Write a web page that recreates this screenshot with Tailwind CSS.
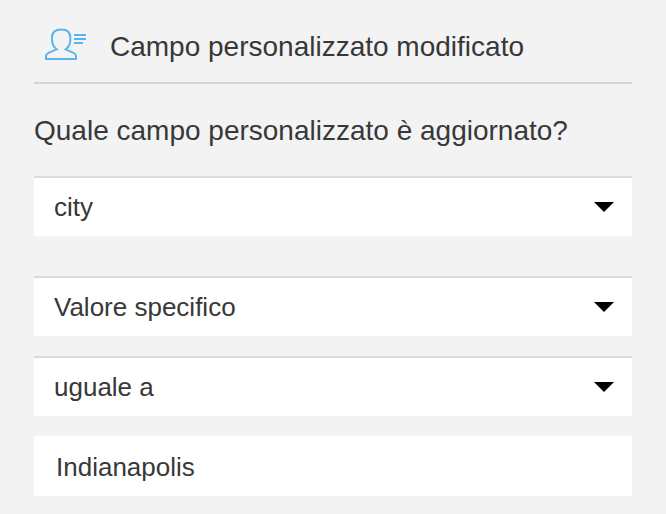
<!DOCTYPE html>
<html lang="it">
<head>
  <meta charset="UTF-8" />
  <meta name="viewport" content="width=device-width, initial-scale=1" />
  <title>Campo personalizzato modificato</title>
  <script src="https://cdn.jsdelivr.net/npm/@tailwindcss/browser@4"></script>
</head>
<body class="bg-[#f3f3f3] min-h-screen px-[34px] text-[#383838] font-['Liberation_Sans',Arial,sans-serif]">
  <header class="flex items-center h-[84px] pt-[10px] pl-[10px] border-b-2 border-[#d5d5d5]">
    <svg class="w-[44px] h-[36px] shrink-0" viewBox="0 0 44 36" fill="none" stroke="#5ab5ec" stroke-width="2">
      <path d="M12.7 21.3C9.5 18.8 8 16 8 12V9.5C8 4.5 11 1.5 17.2 1.5S26.3 4.5 26.3 9.5V12C26.3 16 25 18.8 21.7 21.3L29.5 24.8Q32 26 32 28V31H2V28Q2 26 4.5 24.8Z" />
      <path d="M30 7H42M30 11H42M30 15H39" />
    </svg>
    <h1 class="ml-[22px] pt-0.5 text-[28px] leading-8 whitespace-nowrap">Campo personalizzato modificato</h1>
  </header>

  <main>
    <h2 class="pt-[31px] text-[28px] leading-8 whitespace-nowrap">Quale campo personalizzato è aggiornato?</h2>

    <div class="mt-[29px] h-[60px] flex items-center justify-between pl-5 pr-[18px] bg-white border-t-2 border-[#dcdcdc]">
      <span class="text-[26px] leading-8">city</span>
      <svg class="w-5 h-[10px]" viewBox="0 0 20 10"><path d="M0 0H20L10 10Z" fill="#000" /></svg>
    </div>

    <div class="mt-10 h-[60px] flex items-center justify-between pl-5 pr-[18px] bg-white border-t-2 border-[#dcdcdc]">
      <span class="text-[26px] leading-8">Valore specifico</span>
      <svg class="w-5 h-[10px]" viewBox="0 0 20 10"><path d="M0 0H20L10 10Z" fill="#000" /></svg>
    </div>

    <div class="mt-5 h-[60px] flex items-center justify-between pl-5 pr-[18px] bg-white border-t-2 border-[#dcdcdc]">
      <span class="text-[26px] leading-8">uguale a</span>
      <svg class="w-5 h-[10px]" viewBox="0 0 20 10"><path d="M0 0H20L10 10Z" fill="#000" /></svg>
    </div>

    <div class="mt-5 h-[60px] flex items-center pl-[22px] bg-white">
      <span class="pt-0.5 text-[26px] leading-8">Indianapolis</span>
    </div>
  </main>
</body>
</html>
